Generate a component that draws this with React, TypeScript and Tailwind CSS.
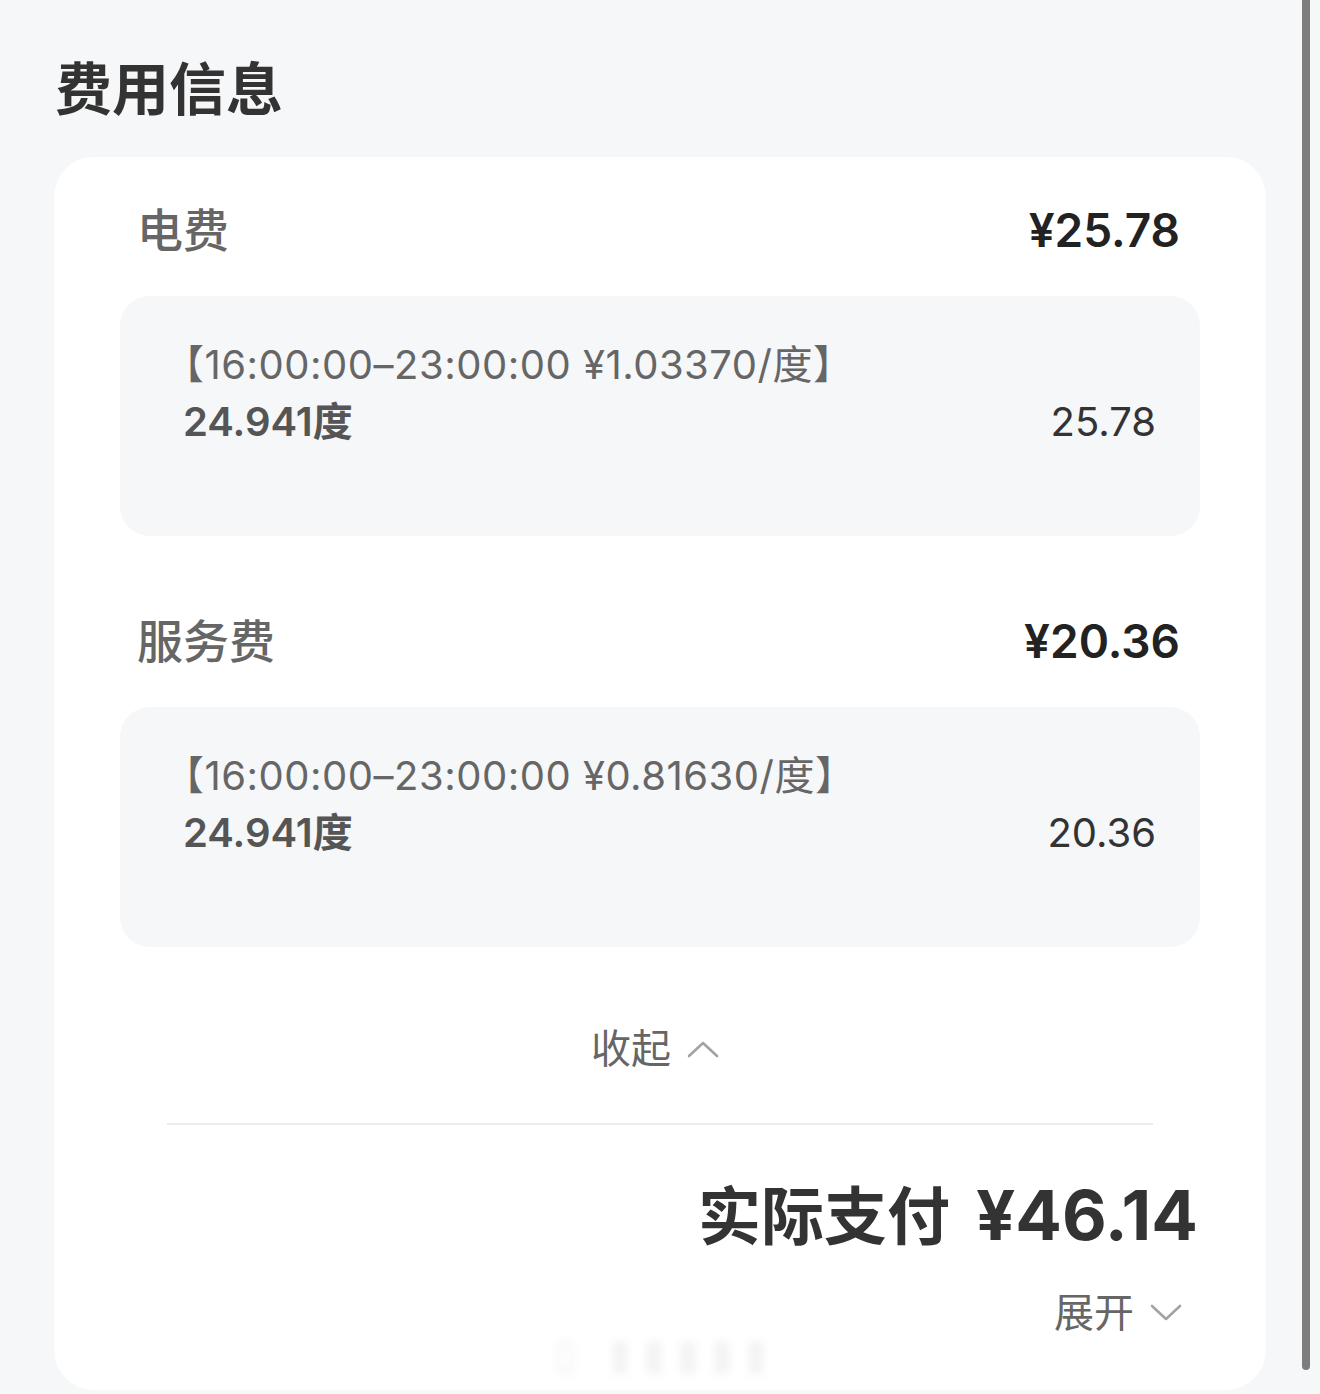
import React from 'react'

const font = { fontFamily: 'Inter, "Noto Sans CJK SC", "Noto Sans", sans-serif' }

const fees = [
  { name: '电费', total: '¥25.78', range: '【16:00:00–23:00:00 ¥1.03370/度】', qty: '24.941度', amount: '25.78' },
  { name: '服务费', total: '¥20.36', range: '【16:00:00–23:00:00 ¥0.81630/度】', qty: '24.941度', amount: '20.36' },
]

function Chevron({ up }: { up?: boolean }) {
  return (
    <svg width="32" height="18" viewBox="0 0 32 18" fill="none" className="shrink-0">
      <polyline
        points={up ? '2,16 16,3 30,16' : '2,2 16,15 30,2'}
        stroke="#a3a3a3"
        strokeWidth="2.6"
        strokeLinecap="round"
        strokeLinejoin="round"
      />
    </svg>
  )
}

export default function App() {
  return (
    <div className="relative min-h-[1394px] w-[1320px] bg-[#f6f7f9] px-[54px] pt-[51px] pb-[6px]" style={font}>
      <h1 className="pl-[1px] text-[57px] font-bold leading-[78px] text-[#333]">费用信息</h1>

      <div className="relative mt-[28px] rounded-[40px] bg-white px-[66px] pt-[43px] pb-[49px]">
        {fees.map((fee, i) => (
          <div key={i} className={i > 0 ? 'mt-[75px]' : ''}>
            <div className="flex h-[60px] items-center justify-between px-[20px]">
              <span className="-ml-[3px] text-[46px] font-medium text-[#666]">{fee.name}</span>
              <span className="text-[46px] font-semibold text-[#222]">{fee.total}</span>
            </div>
            <div className="mt-[36px] rounded-[30px] bg-[#f6f7f9] pt-[40px] pr-[44px] pb-[86px] pl-[44px] text-[40px] leading-[57px]">
              <div className="tracking-[0.5px] text-[#666]">{fee.range}</div>
              <div className="flex items-center justify-between">
                <span className="pl-[19px] font-semibold text-[#555]">{fee.qty}</span>
                <span className="text-[#333]">{fee.amount}</span>
              </div>
            </div>
          </div>
        ))}

        <div className="mt-[74px] flex h-[56px] items-center justify-center gap-[16px] pr-[10px]">
          <span className="text-[40px] text-[#666]">收起</span>
          <Chevron up />
        </div>

        <div className="mx-[47px] mt-[46px] h-[2px] bg-[#ececec]" />

        <div className="mt-[51px] flex h-[80px] items-center justify-end gap-[26px] pr-[2px] font-bold text-[#333]">
          <span className="text-[63px]">实际支付</span>
          <span className="text-[69px]">¥46.14</span>
        </div>

        <div className="mt-[29px] flex h-[56px] items-center justify-end gap-[16px] pr-[18px]">
          <span className="text-[40px] text-[#666]">展开</span>
          <Chevron />
        </div>

        <div className="pointer-events-none absolute bottom-[6px] left-[500px] text-[40px] font-bold tracking-[12px] text-[#f4f4f4] blur-[4px]">
          ▯ ▮▮▮▮▮
        </div>
      </div>

      <div className="absolute top-0 right-[10px] h-[1370px] w-[8px] rounded-b-full bg-[#7d7d7d]" />
    </div>
  )
}
